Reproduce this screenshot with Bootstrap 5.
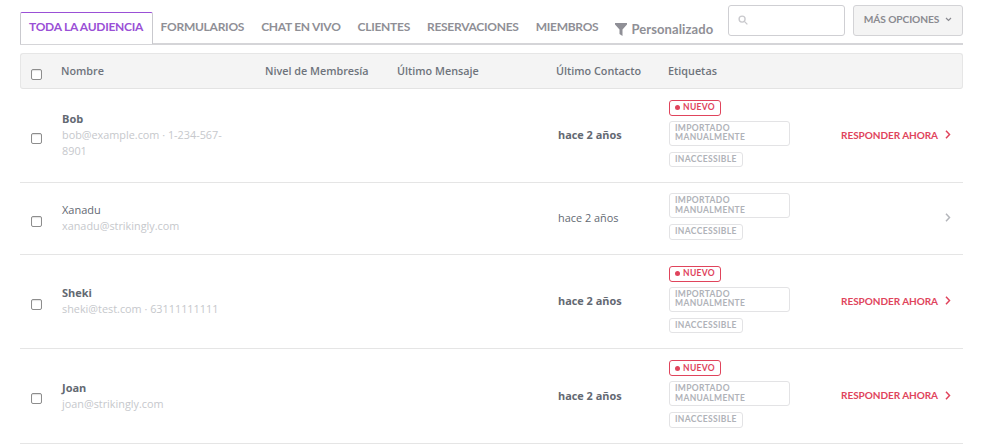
<!DOCTYPE html>
<html lang="es">
<head>
<meta charset="utf-8">
<title>Audiencia</title>
<link href="https://cdn.jsdelivr.net/npm/bootstrap@5.3.0/dist/css/bootstrap.min.css" rel="stylesheet">
<style>
html,body{height:445px;overflow:hidden;background:#fff}
body{font-family:"Open Sans","Liberation Sans",sans-serif;color:#636972;font-size:11px}
.shell{padding:12px 25px 0 20px}
.topbar{height:33px;border-bottom:2px solid #d5d5d8;position:relative}
.tabs-row{display:flex;align-items:flex-start;height:33px}
.tab-item{font-family:Lato,"Liberation Sans",sans-serif;font-weight:700;font-size:12px;letter-spacing:-.27px;color:#8f8f96;line-height:30px;padding:0 8px;margin-right:1px;white-space:nowrap;text-decoration:none;height:31px}
.tab-item.current{color:#9a50d6;border:1px solid #c9c9ce;border-top:1px solid #9a50d6;border-bottom:0;background:#fff;padding:0 8.5px 0 8px;margin-right:0;height:32px;border-radius:2px 2px 0 0;line-height:28px}
.filter-item{font-family:Lato,"Liberation Sans",sans-serif;font-weight:700;font-size:13px;letter-spacing:.1px;color:#8f8f96;display:flex;align-items:center;gap:4px;padding-top:9px;padding-left:8px;line-height:16px}
.tools{margin-left:auto;display:flex;gap:8px;margin-top:-7px}
.search-box{width:117px;height:31px;border:1px solid #cfcfd3;border-radius:3px;padding:9px 0 0 9px;background:#fff}
.more-btn{width:110px;height:31px;border:1px solid #d3d3d6;border-radius:3px;background:#f4f4f4;font-family:Lato,"Liberation Sans",sans-serif;font-weight:700;font-size:10.2px;letter-spacing:-.1px;color:#8a8a90;display:flex;align-items:center;justify-content:center;gap:6px;padding:0 0 2px}
.audience{table-layout:fixed;width:943px;margin:8px 0 0;border-collapse:separate;border-spacing:0;color:#636972}
.audience th{background:#f4f4f4;font-weight:600;font-size:10.8px;color:#6e737b;height:36px;padding:0;vertical-align:middle;border-top:1px solid #e6e6e6;border-bottom:1px solid #e3e3e3;box-shadow:none;white-space:nowrap}
.audience th:first-child{border-left:1px solid #e6e6e6;border-radius:3px 0 0 3px}
.audience th:last-child{border-right:1px solid #e6e6e6;border-radius:0 3px 3px 0}
.audience td{padding:0;vertical-align:middle;border-bottom:1px solid #e5e5e5;font-size:11px;background:#fff;box-shadow:none;color:#636972}
.pick{width:11px;height:11px;border:1px solid #8d8d8d;border-radius:2px;appearance:none;display:block;margin:5px 0 0 11px;background:#fff;box-shadow:inset 0 1px 1px rgba(0,0,0,.12)}
.audience th .pick{margin:7px 0 0 10px}
.who{padding-left:1px;width:168px;margin-bottom:2px}
.who-name{font-size:11px;color:#636972;line-height:17px}
.who-name.strong{font-weight:700}
.who-sub{color:#c6c8cc;font-size:10.85px;line-height:16px}
.when{padding-left:2px;font-size:10.9px;white-space:nowrap;margin-bottom:1px}
.when.strong{font-weight:700}
.tags{display:flex;flex-direction:column;align-items:flex-start;gap:6px;padding-left:1px;margin-bottom:4px}
.tag{font-family:Lato,"Liberation Sans",sans-serif;font-weight:700;font-size:8.5px;letter-spacing:.35px;line-height:9.5px;color:#b0b2b8;border:1px solid #e3e3e5;border-radius:3px;padding:2px 5px;background:#fff}
.tag.wide{width:121px}
.tag.fresh{color:#e0445c;border-color:#e0445c;display:flex;align-items:center;gap:3px;padding:2.25px 5px;margin-bottom:-1px}
.dot{width:5px;height:5px;border-radius:50%;background:#e0445c;display:block}
.reply{display:flex;justify-content:flex-end;align-items:center;gap:7px;padding-right:12px;margin-bottom:2px;font-family:Lato,"Liberation Sans",sans-serif;font-weight:700;font-size:10px;letter-spacing:-.05px;color:#e0445c;white-space:nowrap}
.h1{height:94px}.h2{height:72px}.h3{height:95px}
</style>
</head>
<body>
<div class="shell">
  <div class="topbar">
    <div class="tabs-row">
      <a class="tab-item current" href="#">TODA LA AUDIENCIA</a>
      <a class="tab-item" href="#">FORMULARIOS</a>
      <a class="tab-item" href="#">CHAT EN VIVO</a>
      <a class="tab-item" href="#">CLIENTES</a>
      <a class="tab-item" href="#">RESERVACIONES</a>
      <a class="tab-item" href="#">MIEMBROS</a>
      <span class="filter-item"><svg width="12" height="13" viewBox="0 0 12 13"><path d="M0 0h12v1.500L7.500 6.500V13L4.500 11V6.500L0 1.500z" fill="#8f8f96"/></svg>Personalizado</span>
      <div class="tools">
        <div class="search-box"><svg width="10" height="10" viewBox="0 0 11 11" fill="none" stroke="#c9c9cd" stroke-width="1.500" class="d-block"><circle cx="4.500" cy="4.500" r="3.300"/><path d="M7 7l3.300 3.300"/></svg></div>
        <div class="more-btn">MÁS OPCIONES <svg width="7" height="5" viewBox="0 0 7 5" fill="none" stroke="#8a8a90" stroke-width="1.200"><path d="M1 1l2.500 2.500L6 1"/></svg></div>
      </div>
    </div>
  </div>
  <table class="table audience">
    <colgroup><col style="width:41px"><col style="width:204px"><col style="width:132px"><col style="width:159px"><col style="width:112px"><col style="width:160px"><col></colgroup>
    <thead><tr>
      <th><input class="pick" type="checkbox" aria-label="Seleccionar todo"></th><th>Nombre</th><th>Nivel de Membresía</th><th>Último Mensaje</th><th>Último Contacto</th><th>Etiquetas</th><th></th>
    </tr></thead>
    <tbody>
      <tr class="h1">
        <td><input class="pick" type="checkbox" aria-label="Bob"></td>
        <td><div class="who"><div class="who-name strong">Bob</div><div class="who-sub">bob@example.com · 1-234-567-8901</div></div></td>
        <td></td><td></td>
        <td><div class="when strong">hace 2 años</div></td>
        <td><div class="tags"><span class="tag fresh"><i class="dot"></i>NUEVO</span><span class="tag wide">IMPORTADO MANUALMENTE</span><span class="tag">INACCESSIBLE</span></div></td>
        <td><div class="reply">RESPONDER AHORA <svg width="6" height="9" viewBox="0 0 6 9" fill="none" stroke="#e0445c" stroke-width="1.500"><path d="M1 .8l3.500 3.700L1 8.200"/></svg></div></td>
      </tr>
      <tr class="h2">
        <td><input class="pick" type="checkbox" aria-label="Xanadu"></td>
        <td><div class="who"><div class="who-name">Xanadu</div><div class="who-sub">xanadu@strikingly.com</div></div></td>
        <td></td><td></td>
        <td><div class="when">hace 2 años</div></td>
        <td><div class="tags"><span class="tag wide">IMPORTADO MANUALMENTE</span><span class="tag">INACCESSIBLE</span></div></td>
        <td><div class="reply"><svg width="6" height="9" viewBox="0 0 6 9" fill="none" stroke="#b4b6bb" stroke-width="1.500"><path d="M1 .8l3.500 3.700L1 8.200"/></svg></div></td>
      </tr>
      <tr class="h1">
        <td><input class="pick" type="checkbox" aria-label="Sheki"></td>
        <td><div class="who"><div class="who-name strong">Sheki</div><div class="who-sub">sheki@test.com · 63111111111</div></div></td>
        <td></td><td></td>
        <td><div class="when strong">hace 2 años</div></td>
        <td><div class="tags"><span class="tag fresh"><i class="dot"></i>NUEVO</span><span class="tag wide">IMPORTADO MANUALMENTE</span><span class="tag">INACCESSIBLE</span></div></td>
        <td><div class="reply">RESPONDER AHORA <svg width="6" height="9" viewBox="0 0 6 9" fill="none" stroke="#e0445c" stroke-width="1.500"><path d="M1 .8l3.500 3.700L1 8.200"/></svg></div></td>
      </tr>
      <tr class="h3">
        <td><input class="pick" type="checkbox" aria-label="Joan"></td>
        <td><div class="who"><div class="who-name strong">Joan</div><div class="who-sub">joan@strikingly.com</div></div></td>
        <td></td><td></td>
        <td><div class="when strong">hace 2 años</div></td>
        <td><div class="tags"><span class="tag fresh"><i class="dot"></i>NUEVO</span><span class="tag wide">IMPORTADO MANUALMENTE</span><span class="tag">INACCESSIBLE</span></div></td>
        <td><div class="reply">RESPONDER AHORA <svg width="6" height="9" viewBox="0 0 6 9" fill="none" stroke="#e0445c" stroke-width="1.500"><path d="M1 .8l3.500 3.700L1 8.200"/></svg></div></td>
      </tr>
    </tbody>
  </table>
</div>
</body>
</html>
